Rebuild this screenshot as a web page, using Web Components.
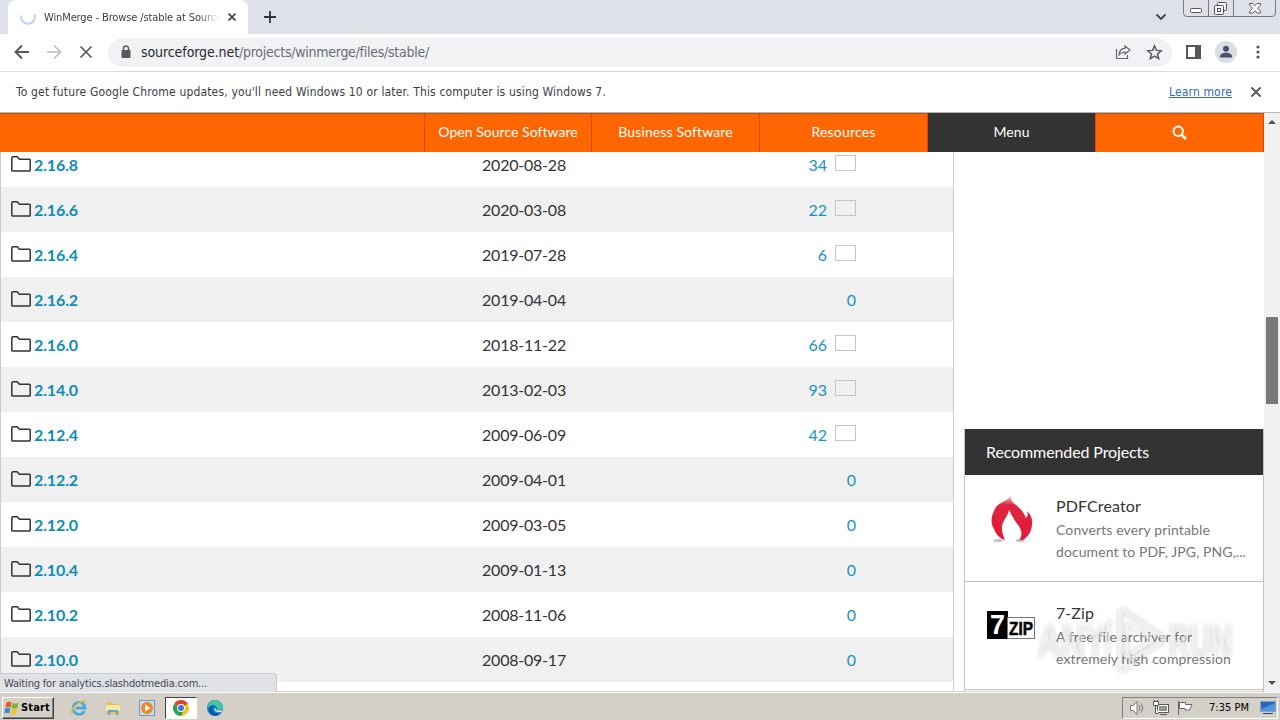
<!DOCTYPE html>
<html lang="en">
<head>
<meta charset="utf-8">
<title>WinMerge - Browse /stable at SourceForge.net</title>
<style>
  body {
    margin: 0;
    width: 1280px;
    height: 720px;
    overflow: hidden;
    font-family: "DejaVu Sans Condensed", "DejaVu Sans", sans-serif;
  }
</style>
</head>
<body>
<desktop-screen>
  <tab-strip slot="chrome">WinMerge - Browse /stable at Source</tab-strip>
  <address-bar slot="chrome" host="sourceforge.net" path="/projects/winmerge/files/stable/"></address-bar>
  <info-bar slot="chrome">To get future Google Chrome updates, you'll need Windows 10 or later. This computer is using Windows 7.</info-bar>
  <page-view slot="page">
    <site-nav slot="nav"></site-nav>
    <file-list slot="files"></file-list>
    <project-panel slot="aside" heading="Recommended Projects">
      <project-card name="PDFCreator" name-width="85" line1="Converts every printable" w1="154" line2="document to PDF, JPG, PNG,..." w2="190">
        <svg slot="logo" width="50" height="50" viewBox="0 0 50 50">
          <defs><linearGradient id="flame" x1="0" y1="0" x2="0" y2="1">
            <stop offset="0" stop-color="#f3c9ce"/><stop offset=".2" stop-color="#dc2740"/><stop offset="1" stop-color="#e31937"/>
          </linearGradient></defs>
          <path fill="url(#flame)" d="M25 1c-.5 4 1 6 5 9 5 4 8 8 10 13 2-2 2-4 1-7 4 4 6 8 5 14-.6 6-3 11-9 15l-4 0c3-4 3-8 1-12-2-4-5-6-7-11-2-2-2-4-4-7-1 6-6 10-7 16-.5 5 1 9 3 14-6-2-9-6-11-11C4 28 5 20 10 12c4-5 11-6 15-11z"/>
          <path fill="#e31937" d="M6 21l7 7-3 6z"/>
          <ellipse cx="12" cy="45.500" rx="4.500" ry="1.500" fill="#888" opacity=".5"/><ellipse cx="34" cy="45.500" rx="4.500" ry="1.500" fill="#888" opacity=".5"/>
        </svg>
      </project-card>
      <project-card name="7-Zip" name-width="38" line1="A free file archiver for" w1="136" line2="extremely high compression" w2="175">
        <svg slot="logo" width="50" height="50" viewBox="0 0 50 50">
          <rect x="1" y="9" width="21" height="28"/>
          <rect x="21.500" y="15.500" width="27" height="21" fill="#fff" stroke="#777"/>
          <text x="4" y="32" font-family="Liberation Sans, sans-serif" font-weight="bold" font-size="27" fill="#fff" textLength="15" lengthAdjust="spacingAndGlyphs">7</text>
          <text x="23" y="32.500" font-family="Liberation Sans, sans-serif" font-weight="bold" font-size="18" textLength="24" lengthAdjust="spacingAndGlyphs" stroke="#000" stroke-width=".5">ZIP</text>
        </svg>
      </project-card>
    </project-panel>
  </page-view>
  <status-bubble slot="status">Waiting for analytics.slashdotmedia.com...</status-bubble>
  <any-watermark slot="status"></any-watermark>
  <task-bar slot="taskbar"></task-bar>
</desktop-screen>

<script>
// Shared base: opens a shadow root and fills it with render()
class BaseElement extends HTMLElement {
  constructor() {
    super();
    this.attachShadow({ mode: 'open' });
  }

  connectedCallback() {
    this.shadowRoot.innerHTML = this.render();
  }
}

// Spreads a single line of text over a given width
class FitText extends BaseElement {
  connectedCallback() {
    super.connectedCallback();
    const width = Number(this.getAttribute('width'));
    const natural = this.getBoundingClientRect().width;
    const slot = this.querySelector('slot');
    const text = slot ? slot.assignedNodes().map((n) => n.textContent).join('') : this.textContent;
    const count = text.trim().length;
    if (width && count) {
      this.style.letterSpacing = (width - natural) / count + 'px';
    }
  }

  render() {
    return `<style>:host { display: inline-block; white-space: nowrap; flex: none; }</style><slot></slot>`;
  }
}
customElements.define('fit-text', FitText);

class DesktopScreen extends BaseElement {
  render() {
    return `
      <style>
        :host {
          position: relative;
          display: grid;
          grid-template-rows: 113px 579px 28px;
          height: 720px;
          background: #fff;
        }
        .page { overflow: hidden; }
      </style>
      <div><slot name="chrome"></slot></div>
      <div class="page"><slot name="page"></slot></div>
      <slot name="taskbar"></slot>
      <slot name="status"></slot>
    `;
  }
}
customElements.define('desktop-screen', DesktopScreen);

class TabStrip extends BaseElement {
  render() {
    return `
      <style>
        :host {
          display: flex;
          height: 34px;
          box-sizing: border-box;
          padding-left: 8px;
          background: #dee1e8;
          font-size: 11px;
          color: #3c4043;
        }
        .tab {
          display: flex;
          align-items: center;
          box-sizing: border-box;
          width: 240px;
          padding-left: 12px;
          background: #fff;
          border-radius: 8px 8px 0 0;
        }
        .title {
          width: 175px;
          margin-left: 8px;
          overflow: hidden;
          -webkit-mask-image: linear-gradient(90deg, #000 155px, transparent 175px);
          mask-image: linear-gradient(90deg, #000 155px, transparent 175px);
        }
        .close { margin-left: 7px; }
        .plus { margin: 11px 0 0 16px; }
        .chevron { margin: 12px 16px 0 auto; }
        .controls { margin-right: 4px; }
      </style>
      <div class="tab">
        <svg width="16" height="16" viewBox="0 0 16 16" fill="none" stroke="#c3d0f5" stroke-width="2"><path d="M1 6.500A7 7 0 1 0 14.500 5.500"/></svg>
        <div class="title"><fit-text width="178"><slot></slot></fit-text></div>
        <svg class="close" width="12" height="12" viewBox="0 0 12 12" stroke="#333639" stroke-width="1.700"><path d="M2.500 2.500l7 7M9.500 2.500l-7 7"/></svg>
      </div>
      <svg class="plus" width="12" height="12" viewBox="0 0 12 12" stroke="#303338" stroke-width="1.800"><path d="M0 6h12M6 0v12"/></svg>
      <svg class="chevron" width="12" height="10" viewBox="0 0 12 10" fill="none" stroke="#3c4043" stroke-width="1.800"><path d="M1.500 2.500L6 7l4.500-4.500"/></svg>
      <svg class="controls" width="93" height="17" viewBox="0 0 93 17" fill="none" stroke="#777a82">
        <path d="M.5 0v13q0 3.500 3.500 3.500h85q3.500 0 3.500-3.500V0M25.500 0v16M50.500 0v16"/>
        <rect x="7.500" y="8.500" width="11" height="4" rx="1" fill="#fff" stroke="#555"/>
        <g stroke="#50535a" fill="#f5f6f8"><rect x="34.500" y="2.500" width="9" height="8" rx="1"/><rect x="31.500" y="5.500" width="9" height="9" rx="1"/><rect x="34.500" y="8.500" width="3" height="3"/></g>
        <path stroke="#555860" fill="#fff" d="M66.500 3.500h3.500l2 2.200 2-2.200h3.500v1.500l-3 3.200 3 3.300v1.500H74l-2-2.300-2 2.300h-3.500v-1.500l3-3.300-3-3.200z"/>
      </svg>
    `;
  }
}
customElements.define('tab-strip', TabStrip);

class AddressBar extends BaseElement {
  render() {
    return `
      <style>
        :host {
          display: flex;
          align-items: center;
          height: 38px;
          box-sizing: border-box;
          padding: 0 13px 1px 14px;
          background: #fff;
          border-bottom: 1px solid #dadce0;
          font-size: 14px;
        }
        .nav { display: flex; gap: 16px; }
        .pill {
          display: flex;
          align-items: center;
          box-sizing: border-box;
          width: 1064px;
          height: 29px;
          margin-left: 14px;
          padding: 0 9px 0 10px;
          border-radius: 15px;
          background: #f0f2f4;
          color: #6a6d72;
        }
        .host { color: #26282b; margin-left: 7px; }
        .share { margin-left: auto; }
        .star { margin-left: 15px; }
        .panel { margin-left: 14px; }
        .avatar { margin-left: 14px; }
        .dots { margin-left: 13px; }
      </style>
      <div class="nav">
        <svg width="16" height="16" viewBox="0 0 16 16" fill="none" stroke="#55585c" stroke-width="1.900"><path d="M15 8H2M8 1.500L1.500 8 8 14.500"/></svg>
        <svg width="16" height="16" viewBox="0 0 16 16" fill="none" stroke="#babcbe" stroke-width="1.700"><path d="M1 8h13M8 1.500L14.500 8 8 14.500"/></svg>
        <svg width="16" height="16" viewBox="0 0 16 16" fill="none" stroke="#55585c" stroke-width="1.700"><path d="M2.500 2.500l11 11M13.500 2.500l-11 11"/></svg>
      </div>
      <div class="pill">
        <svg width="16" height="16" viewBox="0 0 16 16"><rect x="3.500" y="6" width="9" height="8" rx="1" fill="#55585c"/><path d="M5.500 6V4.500a2.500 2.500 0 0 1 5 0V6" fill="none" stroke="#55585c" stroke-width="1.500"/></svg>
        <fit-text class="host" width="98">${this.getAttribute('host')}</fit-text><fit-text width="190">${this.getAttribute('path')}</fit-text>
        <svg class="share" width="16" height="16" viewBox="0 0 16 16" fill="none" stroke="#606368" stroke-width="1.200"><path d="M1.500 5v9.500h11V11M10 2l5 4-5 4V8C7 8 5 9 4 11.500 4 7 6 4.500 10 4.300z"/></svg>
        <svg class="star" width="17" height="17" viewBox="0 0 17 17" fill="none" stroke="#55585c" stroke-width="1.500"><path d="M8.500 2l1.900 4.400 4.800.4-3.700 3.100 1.200 4.700-4.200-2.500-4.200 2.500 1.200-4.700-3.700-3.100 4.800-.4z"/></svg>
      </div>
      <svg class="panel" width="15" height="14" viewBox="0 0 15 14"><path fill="#55585c" d="M0 0h15v14H0zM2 2v10h7V2z" fill-rule="evenodd"/></svg>
      <svg class="avatar" width="22" height="22" viewBox="0 0 22 22"><circle cx="11" cy="11" r="11" fill="#dadde2"/><circle cx="11" cy="7.800" r="3" fill="#47526b"/><path d="M5 16.500v-1.500c0-2 3-3.300 6-3.300s6 1.300 6 3.300v1.500z" fill="#47526b"/></svg>
      <svg class="dots" width="16" height="16" viewBox="0 0 16 16" fill="#55585c"><circle cx="8" cy="3" r="1.600"/><circle cx="8" cy="8" r="1.600"/><circle cx="8" cy="13" r="1.600"/></svg>
    `;
  }
}
customElements.define('address-bar', AddressBar);

class InfoBar extends BaseElement {
  render() {
    return `
      <style>
        :host {
          display: flex;
          align-items: center;
          height: 41px;
          box-sizing: border-box;
          padding: 0 18px 1px 16px;
          background: #fff;
          border-bottom: 1px solid #b9b5b2;
          font-size: 12px;
          color: #3c4043;
        }
        .link { margin-left: auto; color: #3367c0; text-decoration: underline; }
        svg { margin-left: 18px; }
      </style>
      <fit-text width="590"><slot></slot></fit-text>
      <fit-text class="link" width="63">Learn more</fit-text>
      <svg width="12" height="12" viewBox="0 0 12 12" stroke="#55585c" stroke-width="1.900"><path d="M1.500 1.500l9 9M10.500 1.500l-9 9"/></svg>
    `;
  }
}
customElements.define('info-bar', InfoBar);

class PageView extends BaseElement {
  render() {
    return `
      <style>
        :host {
          display: grid;
          grid-template-columns: 1264px 16px;
          height: 579px;
          font-family: Lato, sans-serif;
        }
        .site { display: grid; grid-template-rows: 39px 539px; border-bottom: 1px solid #d4d0c8; }
        .content { display: grid; grid-template-columns: 954px 300px; column-gap: 10px; overflow: hidden; }
        .scroll {
          display: flex;
          flex-direction: column;
          align-items: center;
          box-sizing: border-box;
          padding: 6px 0 4px;
          background: #f1f1f1;
        }
        .thumb { width: 12px; height: 87px; margin-top: 192px; background: #777; }
        .down { margin-top: auto; }
      </style>
      <div class="site">
        <slot name="nav"></slot>
        <div class="content"><slot name="files"></slot><slot name="aside"></slot></div>
      </div>
      <div class="scroll">
        <svg width="8" height="6" viewBox="0 0 8 6"><path d="M0 5h8L4 1z" fill="#505050"/></svg>
        <div class="thumb"></div>
        <svg class="down" width="8" height="9" viewBox="0 0 8 9"><path d="M0 2h8L4 6z" fill="#505050"/></svg>
      </div>
    `;
  }
}
customElements.define('page-view', PageView);

class SiteNav extends BaseElement {
  render() {
    return `
      <style>
        :host {
          display: flex;
          justify-content: flex-end;
          height: 39px;
          background: #f60;
          box-shadow: inset 0 2px 1px -1px #a85b25;
          color: #fff;
          font-size: 14px;
        }
        div {
          display: flex;
          align-items: center;
          justify-content: center;
          box-sizing: border-box;
          width: 168px;
          padding-bottom: 2px;
          border-left: 1px solid #d9480b;
        }
        .first { width: 167px; }
        .menu { background: #333; background-clip: padding-box; }
        .search { width: 169px; padding-bottom: 0; border-right: 1px solid #d9480b; }
      </style>
      <div class="first"><fit-text width="139">Open Source Software</fit-text></div>
      <div><fit-text width="114">Business Software</fit-text></div>
      <div><fit-text width="64">Resources</fit-text></div>
      <div class="menu"><fit-text width="36">Menu</fit-text></div>
      <div class="search"><svg width="15" height="15" viewBox="0 0 15 15" fill="none" stroke="#fff"><circle cx="6.200" cy="6.200" r="4.700" stroke-width="2"/><path d="M9.700 9.700l4.300 4.300" stroke-width="2.600"/></svg></div>
    `;
  }
}
customElements.define('site-nav', SiteNav);

class FileRow extends BaseElement {
  render() {
    const count = this.getAttribute('count');
    const chart = count !== '0';
    return `
      <style>
        :host {
          display: grid;
          grid-template-columns: 471px 327px 154px;
          align-items: center;
          height: 45px;
          font-size: 16px;
          color: #333;
          background: #fff;
        }
        :host(:nth-child(even)) { background: #f0f0f0; }
        .name { display: flex; align-items: center; gap: 3px; padding-left: 10px; color: #0d8db4; font-weight: bold; }
        .name svg { margin-bottom: 1px; }
        .date { padding-left: 10px; }
        .count { display: flex; align-items: center; justify-content: flex-end; gap: 8px; width: 57px; color: #1b93c0; }
        .chart { box-sizing: border-box; width: 21px; height: 16px; margin-bottom: 3px; border: 1px solid #c4c4c4; }
      </style>
      <div class="name">
        <svg width="20" height="16" viewBox="0 0 20 16" fill="none" stroke="#333" stroke-width="1.500"><path d="M.8 14.200V2Q.8.8 2 .8h4.200L8.400 3.300h10q.8 0 .8.8v10.100q0 .8-.8.8H1.600Q.8 15 .8 14.200z"/></svg>
        <fit-text width="44">${this.getAttribute('name')}</fit-text>
      </div>
      <div class="date"><fit-text width="84">${this.getAttribute('date')}</fit-text></div>
      <div class="count"><fit-text width="${count.length * 9.3}">${count}</fit-text>${chart ? '<span class="chart"></span>' : ''}</div>
    `;
  }
}
customElements.define('file-row', FileRow);

const FILES = [
  ['2.16.8', '2020-08-28', 34],
  ['2.16.6', '2020-03-08', 22],
  ['2.16.4', '2019-07-28', 6],
  ['2.16.2', '2019-04-04', 0],
  ['2.16.0', '2018-11-22', 66],
  ['2.14.0', '2013-02-03', 93],
  ['2.12.4', '2009-06-09', 42],
  ['2.12.2', '2009-04-01', 0],
  ['2.12.0', '2009-03-05', 0],
  ['2.10.4', '2009-01-13', 0],
  ['2.10.2', '2008-11-06', 0],
  ['2.10.0', '2008-09-17', 0]
];

class FileList extends BaseElement {
  render() {
    const rows = FILES.map(([name, date, count]) =>
      `<file-row name="${name}" date="${date}" count="${count}"></file-row>`).join('');
    return `
      <style>
        :host {
          display: block;
          box-sizing: border-box;
          height: 539px;
          border-left: 1px solid #ccc;
          border-right: 1px solid #ccc;
          overflow: hidden;
        }
        /* scrolled so the first row sits partly under the nav */
        .rows { margin-top: -10px; }
      </style>
      <div class="rows">${rows}</div>
    `;
  }
}
customElements.define('file-list', FileList);

class ProjectPanel extends BaseElement {
  render() {
    return `
      <style>
        :host { display: block; padding-top: 277px; }
        .box { border: 1px solid #c2c2c2; border-width: 0 1px; height: 262px; overflow: hidden; }
        header {
          display: flex;
          align-items: center;
          box-sizing: border-box;
          height: 46px;
          padding: 0 0 2px 21px;
          background: #333;
          color: #fff;
          font-size: 16px;
        }
      </style>
      <div class="box">
        <header><fit-text width="163">${this.getAttribute('heading')}</fit-text></header>
        <slot></slot>
      </div>
    `;
  }
}
customElements.define('project-panel', ProjectPanel);

class ProjectCard extends BaseElement {
  render() {
    const attr = (name) => this.getAttribute(name);
    return `
      <style>
        :host {
          display: flex;
          box-sizing: border-box;
          height: 107px;
          padding: 20px 0 0 21px;
          border-bottom: 1px solid #c2c2c2;
          color: #777;
          font-size: 14px;
          line-height: 22px;
        }
        :host(:last-child) { height: 108px; }
        .logo { width: 70px; flex: none; }
        .text { display: flex; flex-direction: column; align-items: flex-start; }
        .name { font-size: 16px; line-height: 22px; padding-bottom: 2px; color: #333; }
      </style>
      <div class="logo"><slot name="logo"></slot></div>
      <div class="text">
        <fit-text class="name" width="${attr('name-width')}">${attr('name')}</fit-text>
        <fit-text width="${attr('w1')}">${attr('line1')}</fit-text>
        <fit-text width="${attr('w2')}">${attr('line2')}</fit-text>
      </div>
    `;
  }
}
customElements.define('project-card', ProjectCard);

class StatusBubble extends BaseElement {
  render() {
    return `
      <style>
        :host {
          position: absolute;
          left: 0;
          bottom: 28px;
          display: flex;
          align-items: center;
          box-sizing: border-box;
          width: 277px;
          height: 19px;
          padding-left: 4px;
          background: #dee1e6;
          border: solid #c8cacd;
          border-width: 1px 1px 0 0;
          border-radius: 0 4px 0 0;
          font-size: 11px;
          color: #45484c;
        }
      </style>
      <fit-text width="203"><slot></slot></fit-text>
    `;
  }
}
customElements.define('status-bubble', StatusBubble);

class AnyWatermark extends BaseElement {
  render() {
    return `
      <style>
        :host { position: absolute; left: 1034px; top: 604px; display: block; }
        svg { display: block; filter: drop-shadow(0 0 2px rgba(0, 0, 0, .4)); }
      </style>
      <svg width="204" height="74" viewBox="0 0 204 74" fill="#fff" fill-opacity=".45" font-family="Liberation Sans, sans-serif" font-weight="bold" font-size="46">
        <text x="4" y="53" textLength="68" lengthAdjust="spacingAndGlyphs">ANY</text>
        <text x="135" y="53" textLength="63" lengthAdjust="spacingAndGlyphs">RUN</text>
        <g fill="none" stroke="#fff" stroke-opacity=".5" stroke-linejoin="round">
          <path stroke-width="4" d="M86 47V9q0-4 4-2l37 25q5 4 0 7L96 56"/>
          <path stroke-width="3" d="M78 17q-4 2-4 6v30M94 54l-8-5v15q0 4 4 2l12-8"/>
          <path stroke-width="3" d="M93 20l25 16-25 17z"/>
        </g>
      </svg>
    `;
  }
}
customElements.define('any-watermark', AnyWatermark);

class TaskBar extends BaseElement {
  render() {
    return `
      <style>
        :host {
          display: flex;
          align-items: center;
          box-sizing: border-box;
          height: 28px;
          padding: 2px 2px 0;
          background: #d4d0c8;
          border-top: 1px solid #fff;
          font-size: 11px;
          color: #000;
        }
        .start {
          display: flex;
          align-items: center;
          gap: 1px;
          box-sizing: border-box;
          width: 52px;
          height: 22px;
          padding-left: 1px;
          border: 1px solid;
          border-color: #fff #404040 #404040 #fff;
          box-shadow: inset -1px -1px #808080;
          font-weight: bold;
        }
        .app { display: flex; align-items: center; justify-content: center; width: 34px; height: 22px; }
        .apps { display: flex; margin-left: 8px; }
        .active { box-sizing: border-box; width: 32px; margin: 0 1px; background: #fff; border: 1px solid; border-color: #404040 #fff #fff #404040; }
        .tray {
          display: flex;
          align-items: center;
          box-sizing: border-box;
          width: 156px;
          height: 22px;
          margin-left: auto;
          padding-left: 6px;
          border: 1px solid;
          border-color: #808080 #fff #fff #808080;
        }
        .tray svg { margin-right: 8px; }
        .tray fit-text { margin: 0 11px 0 7px; }
        .tray .desk { margin: 0; }
      </style>
      <div class="start">
        <svg width="16" height="16" viewBox="0 0 16 16"><path d="M2.500 2.500Q5 1 7.500 2.500L6.500 7.500Q4 6 1.500 7.500z" fill="#e9552b"/><path d="M8.500 3Q11 4.500 14.500 3l-1.200 5Q10 9.500 7.500 8z" fill="#7cb82f"/><path d="M1.300 8.500Q4 7 6.300 8.500l-1 5Q3 12 .3 13.500z" fill="#3d87cf"/><path d="M7.300 9Q10 10.500 13 9l-1.200 5Q8.500 15.500 6.200 14z" fill="#f5c12e"/></svg>
        <fit-text width="29">Start</fit-text>
      </div>
      <div class="apps">
        <div class="app"><svg width="18" height="18" viewBox="0 0 18 18" fill="none"><path d="M14.500 12a6 6 0 1 1 .6-3H6" stroke="#49a8df" stroke-width="2.800"/><path d="M2 15.500C-1 12 9 1 16 2.500" stroke="#e9bd42" stroke-width="1.500"/></svg></div>
        <div class="app"><svg width="18" height="18" viewBox="0 0 18 18"><path d="M2 3h6l1 2h7v10H2z" fill="#e5bf59"/><path d="M2 6h14v6H2z" fill="#f8e5a0"/><path d="M4 16v-5h10v5h-2v-3H6v3z" fill="#55a9d6"/></svg></div>
        <div class="app"><svg width="16" height="16" viewBox="0 0 16 16"><rect x=".5" y=".5" width="15" height="15" fill="#c7dcee" stroke="#6f9dc8"/><circle cx="8" cy="8" r="6" fill="#ef8722"/><path d="M6 4.500v7l5.500-3.500z" fill="#fff"/></svg></div>
        <div class="app active"><svg width="16" height="16" viewBox="0 0 16 16"><path d="M8 8L1.070 4A8 8 0 0 1 14.930 4z" fill="#e0412f"/><path d="M8 8L1.070 4A8 8 0 0 0 8 16l3.500-6z" fill="#2ca14c"/><path d="M8 8l6.930-4A8 8 0 0 1 8 16l3.400-6z" fill="#fbc116"/><circle cx="8" cy="8" r="4" fill="#fff"/><circle cx="8" cy="8" r="3" fill="#3b78e7"/></svg></div>
        <div class="app"><svg width="16" height="16" viewBox="0 0 16 16"><circle cx="8" cy="8" r="8" fill="#1478cf"/><path d="M1 5C4-2 15-1.500 16 7c0 4-4 4.500-6 3.500C11 8 9 5 6 5 4 5 2 6 .2 8z" fill="#42c7a0"/><path d="M5.500 8.500c-1 4 3 6 8 4.500C9 18 2 15 2 10.500 2 7 5 5.500 7.500 5.500c-1 .5-1.700 1.500-2 3z" fill="#0c59a4"/><path d="M8 8.500c0 2.800 3.800 4 6.800 2.300" stroke="#d9e9f2" fill="none" stroke-width="1.500"/></svg></div>
      </div>
      <div class="tray">
        <svg width="16" height="16" viewBox="0 0 16 16" fill="none" stroke="#777"><path d="M1.500 5.500h3l3.500-4v13L4.500 10.500h-3z" fill="#fff"/><path d="M10 5q2 3 0 6M12.300 3.500q3 4.500 0 9"/></svg>
        <svg width="16" height="16" viewBox="0 0 16 16" fill="#fff" stroke="#555"><rect x="4.500" y="4.500" width="11" height="8"/><rect x="6.500" y="6.500" width="7" height="4" fill="#9a9a9a" stroke="#888"/><path d="M7 14.500h7M.5 1.500h5v4h-5zM2.500 5.500v8h3M1.500 0v2M4.500 0v2"/></svg>
        <svg width="17" height="16" viewBox="0 0 17 16" fill="#fff" stroke="#666"><path d="M1.500 1v14M2.500 2.500h6v2h6.500l-2.500 5.500H8V8.500H2.500z"/></svg>
        <fit-text width="40">7:35 PM</fit-text>
        <svg class="desk" width="16" height="14" viewBox="0 0 16 14"><rect x=".5" y=".5" width="15" height="10" fill="#2867b5" stroke="#7da6ce"/><path d="M1 8L15 2v8H1z" fill="#4d93d8"/><path d="M3 12.500h10" stroke="#234b7d"/></svg>
      </div>
    `;
  }
}
customElements.define('task-bar', TaskBar);
</script>
</body>
</html>
